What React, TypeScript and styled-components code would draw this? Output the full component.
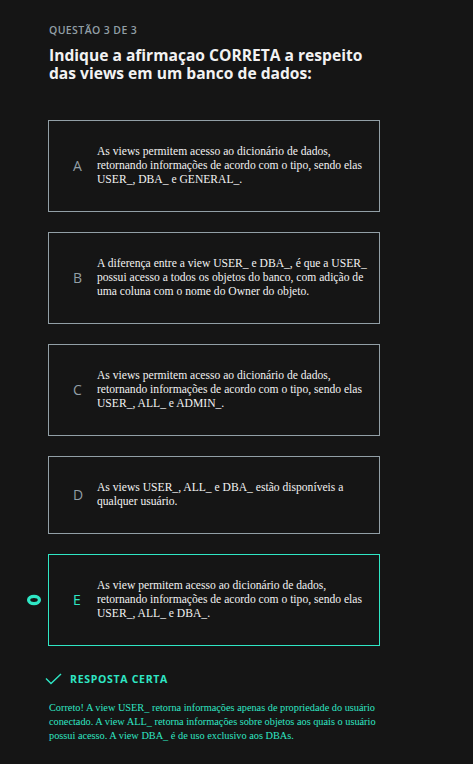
import React from "react";
import styled, { createGlobalStyle } from "styled-components";

const Global = createGlobalStyle`
  html, body { margin: 0; padding: 0; background: #151515; }
  body { font-family: "Liberation Serif", serif; }
`;

const TEAL = "#2fe6c4";
const GRAY = "#929fa6";

const Page = styled.div`
  width: 473px;
  min-height: 764px;
  box-sizing: border-box;
  padding: 24px 0 20px 48px;
  background: #151515;
`;

const Label = styled.div`
  font-family: "Open Sans", "Noto Sans", sans-serif;
  font-weight: 600;
  font-size: 10.5px;
  line-height: 13px;
  letter-spacing: 0.4px;
  color: ${GRAY};
  padding-left: 1px;
  text-transform: uppercase;
`;

const Title = styled.h1`
  margin: 9px 0 0 1px;
  font-family: "Open Sans", "Noto Sans", sans-serif;
  font-weight: 700;
  font-size: 15.6px;
  line-height: 18px;
  color: #f2f2f2;
  width: 325px;
`;

const List = styled.div`
  margin-top: 38px;
  display: flex;
  flex-direction: column;
  gap: 20px;
  width: 332px;
`;

const OptionWrap = styled.div`
  position: relative;
`;

const Card = styled.div<{ $selected?: boolean }>`
  box-sizing: border-box;
  width: 332px;
  border: 1px solid ${(p) => (p.$selected ? TEAL : GRAY)};
  padding: 24px 12px 24px 24px;
  display: flex;
  align-items: center;
`;

const Letter = styled.div<{ $selected?: boolean }>`
  flex: 0 0 24px;
  font-family: "Open Sans", "Noto Sans", sans-serif;
  font-size: 14px;
  line-height: 14px;
  color: ${(p) => (p.$selected ? TEAL : GRAY)};
`;

const Text = styled.div`
  flex: 1;
  font-family: "Liberation Serif", serif;
  font-size: 11.6px;
  line-height: 14px;
  color: #f2f2f2;
`;

const Marker = styled.svg`
  position: absolute;
  left: -23px;
  top: 50%;
  margin-top: -7px;
`;

const ResultRow = styled.div`
  margin-top: 27px;
  display: flex;
  align-items: center;
  gap: 8px;
  margin-left: -3px;
`;

const ResultLabel = styled.span`
  font-family: "Open Sans", "Noto Sans", sans-serif;
  font-weight: 700;
  font-size: 10.5px;
  line-height: 12px;
  letter-spacing: 0.7px;
  color: ${TEAL};
`;

const Feedback = styled.p`
  margin: 16px 0 0 1px;
  width: 336px;
  font-family: "Liberation Serif", serif;
  font-size: 10.3px;
  line-height: 14px;
  color: ${TEAL};
`;

const options = [
  {
    l: "A",
    t: "As views permitem acesso ao dicionário de dados, retornando informações de acordo com o tipo, sendo elas USER_, DBA_ e GENERAL_.",
  },
  {
    l: "B",
    t: "A diferença entre a view USER_ e DBA_, é que a USER_ possui acesso a todos os objetos do banco, com adição de uma coluna com o nome do Owner do objeto.",
  },
  {
    l: "C",
    t: "As views permitem acesso ao dicionário de dados, retornando informações de acordo com o tipo, sendo elas USER_, ALL_ e ADMIN_.",
  },
  {
    l: "D",
    t: "As views USER_, ALL_ e DBA_ estão disponíveis a qualquer usuário.",
  },
  {
    l: "E",
    t: "As view permitem acesso ao dicionário de dados, retornando informações de acordo com o tipo, sendo elas USER_, ALL_ e DBA_.",
    sel: true,
  },
];

export default function App() {
  return (
    <Page>
      <Global />
      <Label>Questão 3 de 3</Label>
      <Title>Indique a afirmaçao CORRETA a respeito das views em um banco de dados:</Title>
      <List>
        {options.map((o) => (
          <OptionWrap key={o.l}>
            {o.sel && (
              <Marker width="18" height="14" viewBox="0 0 18 14">
                <ellipse cx="9" cy="7" rx="5.4" ry="3.6" fill="none" stroke={TEAL} strokeWidth="3.3" />
              </Marker>
            )}
            <Card $selected={o.sel}>
              <Letter $selected={o.sel}>{o.l}</Letter>
              <Text>{o.t}</Text>
            </Card>
          </OptionWrap>
        ))}
      </List>
      <ResultRow>
        <svg width="17" height="12" viewBox="0 0 17 12">
          <path d="M1 5.5 L6 10.5 L16 1" fill="none" stroke={TEAL} strokeWidth="1.4" />
        </svg>
        <ResultLabel>RESPOSTA CERTA</ResultLabel>
      </ResultRow>
      <Feedback>
        Correto! A view USER_ retorna informações apenas de propriedade do usuário conectado. A view ALL_ retorna informações sobre objetos aos quais o usuário possui acesso. A view DBA_ é de uso exclusivo aos DBAs.
      </Feedback>
    </Page>
  );
}
